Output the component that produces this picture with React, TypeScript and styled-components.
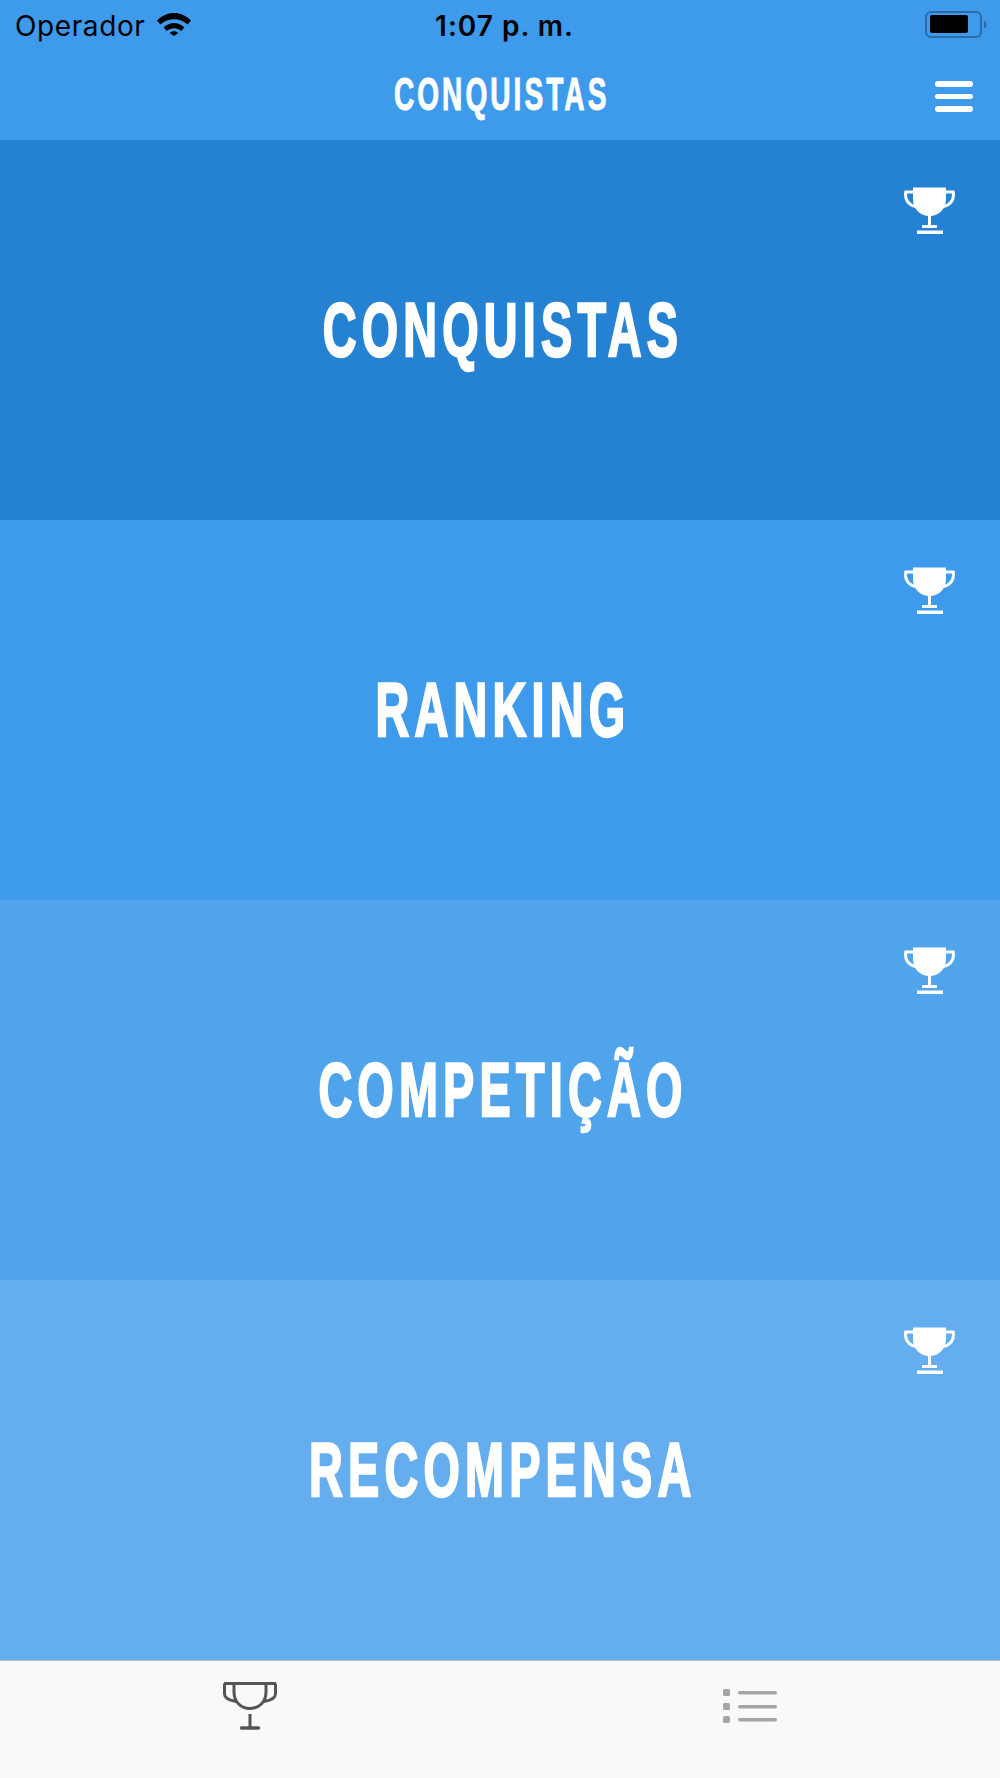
import styled, { createGlobalStyle } from 'styled-components'

const GlobalStyle = createGlobalStyle`
	html, body {
		margin: 0;
		padding: 0;
		background: #f9f9f9;
	}
`

const Screen = styled.div`
	width: 1000px;
	height: 1778px;
	display: flex;
	flex-direction: column;
	overflow: hidden;
	font-family: "Liberation Sans", Arial, sans-serif;
`

const TopBar = styled.header`
	height: 140px;
	background-color: #3e9aea;
	display: flex;
	flex-direction: column;
`

const StatusBar = styled.div`
	height: 52px;
	padding: 0 12px 0 15px;
	display: grid;
	grid-template-columns: 1fr auto 1fr;
	align-items: center;
	color: #000;
	font-family: Inter, sans-serif;
	font-size: 28px;
`

const Carrier = styled.div`
	display: flex;
	align-items: center;
	gap: 12px;
	letter-spacing: 0.6px;

	& > svg {
		margin-top: -4px;
	}
`

const Clock = styled.div`
	font-weight: 600;
	letter-spacing: 1px;
	padding-left: 6px;
`

const BatteryBox = styled.div`
	justify-self: end;
	align-self: start;
	padding-top: 10px;
	display: flex;
`

const NavRow = styled.div`
	flex: 1;
	position: relative;
	display: flex;
	align-items: center;
	justify-content: center;
	padding-bottom: 4px;
`

const Condensed = styled.span<{ $size: number; $stretch: number; $spacing: number; $weight: number }>`
	display: inline-block;
	color: #fff;
	font-family: "Liberation Sans", sans-serif;
	font-weight: 700;
	font-size: ${(props) => props.$size}px;
	letter-spacing: ${(props) => props.$spacing}px;
	padding-left: ${(props) => props.$spacing}px;
	-webkit-text-stroke: ${(props) => props.$weight}px #fff;
	line-height: 1;
	white-space: nowrap;
	transform: scaleX(${(props) => props.$stretch});
`

const MenuButton = styled.div`
	position: absolute;
	right: 27px;
	top: 29px;
	width: 38px;
	display: flex;
	flex-direction: column;
	gap: 7px;

	& > i {
		display: block;
		height: 5.5px;
		border-radius: 3px;
		background: #fff;
	}
`

const Sections = styled.main`
	height: 1520px;
	display: grid;
	grid-template-rows: repeat(4, 1fr);
`

const Section = styled.section<{ $bg: string }>`
	position: relative;
	background-color: ${(props) => props.$bg};
	display: flex;
	justify-content: center;
	padding-top: 152px;
`

const TrophyBadge = styled.div`
	position: absolute;
	top: 47px;
	right: 44px;
	display: flex;
`

const TabBar = styled.nav`
	flex: 1;
	background-color: #f9f9f9;
	border-top: 1px solid #b5bcc4;
	display: grid;
	grid-template-columns: 1fr 1fr;
`

const Tab = styled.div<{ $top: number }>`
	display: flex;
	justify-content: center;
	align-items: flex-start;
	padding-top: ${(props) => props.$top}px;
`

const WifiIcon = () => (
	<svg width="34" height="24" viewBox="0 0 34 24">
		<path d="M0 8.5 C9.5 -1.5 24.5 -1.5 34 8.5 L30.6 12.5 C23 5.5 11 5.5 3.4 12.5 Z" fill="#000" />
		<path d="M6.6 15.6 C12.5 9.6 21.5 9.6 27.4 15.6 L24.2 19 C20 15.2 14 15.2 9.8 19 Z" fill="#000" />
		<path d="M12.6 21 C15.4 18.8 18.6 18.8 21.4 21 L17 24 Z" fill="#000" />
	</svg>
)

const BatteryIcon = () => (
	<svg width="64" height="28" viewBox="0 0 64 28">
		<rect x="2" y="2" width="55" height="25" rx="5" fill="none" stroke="#2a6ba6" strokeWidth="2" />
		<rect x="6" y="5" width="38" height="18" rx="2" fill="#000" />
		<path d="M60 10.5 C62 11.5 62.5 13 62.5 14.5 C62.5 16 62 17.5 60 18.5 Z" fill="#2a6ba6" />
	</svg>
)

const SolidTrophy = () => (
	<svg width="52" height="48" viewBox="0 0 52 48">
		<path d="M9 0.5 H42 V12 C42 22 35 29 25.5 29 C16 29 9 22 9 12 Z" fill="#fff" />
		<path d="M10 5 H1.8 C0.5 12 4 18 12 19.5 M41 5 H49.2 C50.5 12 47 18 39 19.5" fill="none" stroke="#fff" strokeWidth="3" />
		<rect x="24" y="28" width="3" height="11" fill="#fff" />
		<rect x="18" y="38" width="15" height="3" fill="#fff" />
		<rect x="13" y="43.5" width="26" height="3.5" fill="#fff" />
	</svg>
)

const OutlineTrophy = () => (
	<svg width="56" height="50" viewBox="0 0 56 50">
		<path d="M2 2.5 H54 M12 2.5 V11 C12 21 19 27.5 28 27.5 C37 27.5 44 21 44 11 V2.5 M2.5 2.5 V13 C2.5 17 6 19 14 20.5 M53.5 2.5 V13 C53.5 17 50 19 42 20.5" fill="none" stroke="#555" strokeWidth="3" />
		<path d="M28 33 V47" fill="none" stroke="#555" strokeWidth="3" />
		<path d="M19.5 47 H36.5" fill="none" stroke="#555" strokeWidth="3.5" strokeLinecap="round" />
	</svg>
)

const ListIcon = () => (
	<svg width="54" height="36" viewBox="0 0 54 36">
		<g fill="#a5a5a5">
			<rect x="0" y="0" width="7" height="7" rx="1.5" />
			<rect x="0" y="14" width="7" height="7" rx="1.5" />
			<rect x="0" y="27" width="7" height="7" rx="1.5" />
			<rect x="15" y="2" width="39" height="3.5" rx="1.7" />
			<rect x="15" y="16" width="39" height="3.5" rx="1.7" />
			<rect x="15" y="29" width="39" height="3.5" rx="1.7" />
		</g>
	</svg>
)

const items = [
	{ label: 'CONQUISTAS', bg: '#2581d2' },
	{ label: 'RANKING', bg: '#3e9aea' },
	{ label: 'COMPETIÇÃO', bg: '#50a4ec' },
	{ label: 'RECOMPENSA', bg: '#64adee' },
]

export default function App() {
	return (
		<Screen>
			<GlobalStyle />
			<TopBar>
				<StatusBar>
					<Carrier>
						Operador
						<WifiIcon />
					</Carrier>
					<Clock>1:07 p. m.</Clock>
					<BatteryBox>
						<BatteryIcon />
					</BatteryBox>
				</StatusBar>
				<NavRow>
					<Condensed $size={46} $stretch={0.61} $spacing={5} $weight={1}>CONQUISTAS</Condensed>
					<MenuButton>
						<i />
						<i />
						<i />
					</MenuButton>
				</NavRow>
			</TopBar>
			<Sections>
				{items.map((item) => (
					<Section key={item.label} $bg={item.bg}>
						<TrophyBadge>
							<SolidTrophy />
						</TrophyBadge>
						<Condensed $size={76} $stretch={0.615} $spacing={8.5} $weight={2.5}>{item.label}</Condensed>
					</Section>
				))}
			</Sections>
			<TabBar>
				<Tab $top={20}>
					<OutlineTrophy />
				</Tab>
				<Tab $top={28}>
					<ListIcon />
				</Tab>
			</TabBar>
		</Screen>
	)
}
